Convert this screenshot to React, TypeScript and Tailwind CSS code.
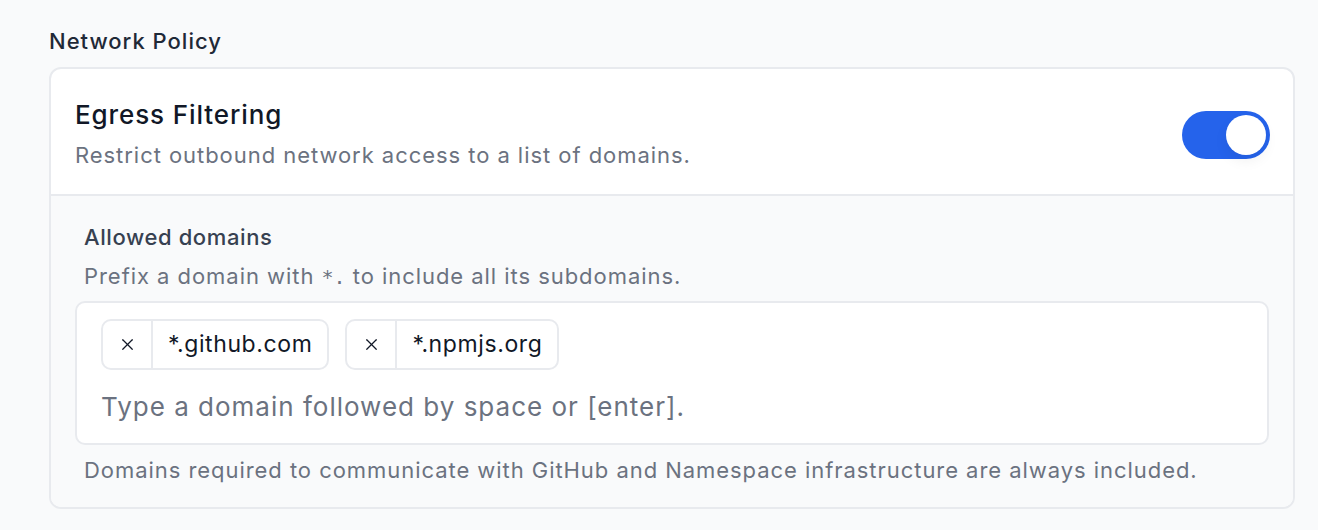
import { X } from "lucide-react";

const domains = ["*.github.com", "*.npmjs.org"];

function Toggle() {
  return (
    <div className="relative h-[48px] w-[88px] rounded-full bg-[#2563eb]">
      <div className="absolute right-[4px] top-[4px] h-[40px] w-[40px] rounded-full bg-white shadow-[0_6px_14px_rgba(0,0,0,0.06)]" />
    </div>
  );
}

function Chip({ label }: { label: string }) {
  return (
    <div className="flex h-[51px] items-stretch rounded-[10px] border-2 border-[#e8eaee] bg-white">
      <div className="flex w-[50px] items-center justify-center border-r-2 border-[#e8eaee]">
        <X size={19} strokeWidth={1.5} className="text-[#111827]" />
      </div>
      <div className="flex items-center px-[15px] text-[23px] tracking-[0.6px] text-[#111827]">{label}</div>
    </div>
  );
}

export default function App() {
  return (
    <div className="min-h-[530px] bg-[#f9fafb] px-[49px] pr-[23px] pt-[27px] font-['Inter',sans-serif]">
      <h2 className="text-[22px] font-medium leading-[28px] tracking-[1px] text-[#1f2937]">Network Policy</h2>
      <div className="mt-[12px] overflow-hidden rounded-[12px] border-2 border-[#e8eaee] bg-white">
        <div className="flex items-center justify-between border-b-2 border-[#e8eaee] pl-[24px] pr-[23px] pt-[29px] pb-[23px]">
          <div>
            <div className="text-[26px] font-medium leading-[34px] tracking-[0.9px] text-[#111827]">Egress Filtering</div>
            <div className="mt-[7px] text-[22px] leading-[32px] tracking-[0.95px] text-[#6b7280]">
              Restrict outbound network access to a list of domains.
            </div>
          </div>
          <Toggle />
        </div>
        <div className="bg-[#f9fafb] px-[24px] pt-[26px] pb-[22px]">
          <div className="pl-[9px] text-[22px] font-medium leading-[30px] tracking-[0.6px] text-[#374151]">Allowed domains</div>
          <div className="mt-[9px] pl-[9px] text-[22px] leading-[30px] tracking-[0.95px] text-[#6b7280]">
            Prefix a domain with <span className="font-['DejaVu_Sans_Mono',monospace] text-[20px] tracking-normal">*.</span> to
            include all its subdomains.
          </div>
          <div className="mt-[9px] rounded-[10px] border-2 border-[#e8eaee] bg-white px-[24px] pt-[16px] pb-[17px]">
            <div className="flex gap-[16px]">
              {domains.map((d) => (
                <Chip key={d} label={d} />
              ))}
            </div>
            <div className="mt-[18px] text-[26px] leading-[38px] tracking-[1px] text-[#6b7280]">
              Type a domain followed by space or [enter].
            </div>
          </div>
          <div className="mt-[10px] pl-[9px] text-[22px] leading-[30px] tracking-[0.95px] text-[#6b7280]">
            Domains required to communicate with GitHub and Namespace infrastructure are always included.
          </div>
        </div>
      </div>
    </div>
  );
}
